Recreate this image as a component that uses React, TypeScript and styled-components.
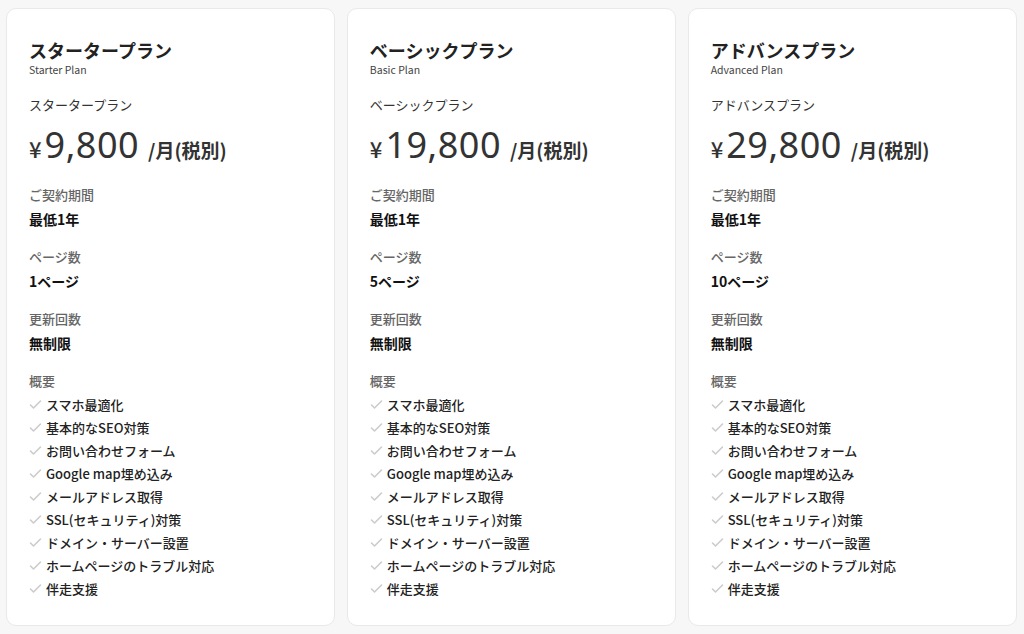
import React from "react";
import styled, { createGlobalStyle } from "styled-components";

const Global = createGlobalStyle`
  html, body { margin: 0; padding: 0; background: #f7f7f7; }
  body { font-family: "Noto Sans CJK JP", "Noto Sans", sans-serif; color: #222; }
`;

const Grid = styled.div`
  display: grid;
  grid-template-columns: repeat(3, 1fr);
  column-gap: 11.5px;
  padding: 8px 7px 8px 6px;
`;

const Card = styled.section`
  background: #fff;
  border: 1px solid #e9e9e9;
  border-radius: 10px;
  height: 618px;
  box-sizing: border-box;
  padding: 27px 22px 0 22px;
  display: flex;
  flex-direction: column;
`;

const Title = styled.h2`
  margin: 0;
  font-size: 18px;
  line-height: 28px;
  font-weight: 700;
  color: #222;
`;

const Sub = styled.div`
  font-size: 10.5px;
  line-height: 13px;
  color: #444;
  margin-top: -1px;
`;

const PlanName = styled.div`
  font-size: 13px;
  line-height: 18px;
  color: #333;
  margin-top: 20px;
`;

const PriceRow = styled.div`
  display: flex;
  align-items: baseline;
  margin-top: 8px;
  color: #333;
`;

const Yen = styled.span`
  font-size: 22px;
  font-weight: 500;
  margin-right: 3px;
`;

const Amount = styled.span`
  font-family: "Noto Sans", "Noto Sans CJK JP", sans-serif;
  font-size: 36px;
  line-height: 46px;
  font-weight: 400;
  letter-spacing: 0.5px;
`;

const Per = styled.span`
  font-size: 19px;
  font-weight: 700;
  margin-left: 9px;
`;

const Label = styled.div<{ $mt: number }>`
  font-size: 13px;
  line-height: 18px;
  color: #666;
  font-weight: 500;
  margin-top: ${(p) => p.$mt}px;
`;

const Value = styled.div`
  font-size: 14px;
  line-height: 20px;
  font-weight: 700;
  color: #111;
  margin-top: 5px;
`;

const List = styled.ul`
  list-style: none;
  margin: 3px 0 0 0;
  padding: 0;
`;

const Item = styled.li`
  display: flex;
  align-items: center;
  gap: 4px;
  font-size: 13px;
  line-height: 23px;
  font-weight: 500;
  color: #222;
`;

const Check = () => (
  <svg width="13" height="13" viewBox="0 0 13 13" fill="none">
    <path d="M1.5 7l3 3L11.5 3" stroke="#cccccc" strokeWidth="1.6" strokeLinecap="round" strokeLinejoin="round" />
  </svg>
);

const features = [
  "スマホ最適化",
  "基本的なSEO対策",
  "お問い合わせフォーム",
  "Google map埋め込み",
  "メールアドレス取得",
  "SSL(セキュリティ)対策",
  "ドメイン・サーバー設置",
  "ホームページのトラブル対応",
  "伴走支援",
];

const plans = [
  { ja: "スタータープラン", en: "Starter Plan", price: "9,800", pages: "1ページ" },
  { ja: "ベーシックプラン", en: "Basic Plan", price: "19,800", pages: "5ページ" },
  { ja: "アドバンスプラン", en: "Advanced Plan", price: "29,800", pages: "10ページ" },
];

export default function App() {
  return (
    <>
      <Global />
      <Grid>
        {plans.map((p) => (
          <Card key={p.en}>
            <Title>{p.ja}</Title>
            <Sub>{p.en}</Sub>
            <PlanName>{p.ja}</PlanName>
            <PriceRow>
              <Yen>¥</Yen>
              <Amount>{p.price}</Amount>
              <Per>/月(税別)</Per>
            </PriceRow>
            <Label $mt={18}>ご契約期間</Label>
            <Value>最低1年</Value>
            <Label $mt={19}>ページ数</Label>
            <Value>{p.pages}</Value>
            <Label $mt={19}>更新回数</Label>
            <Value>無制限</Value>
            <Label $mt={19}>概要</Label>
            <List>
              {features.map((f) => (
                <Item key={f}>
                  <Check />
                  {f}
                </Item>
              ))}
            </List>
          </Card>
        ))}
      </Grid>
    </>
  );
}
